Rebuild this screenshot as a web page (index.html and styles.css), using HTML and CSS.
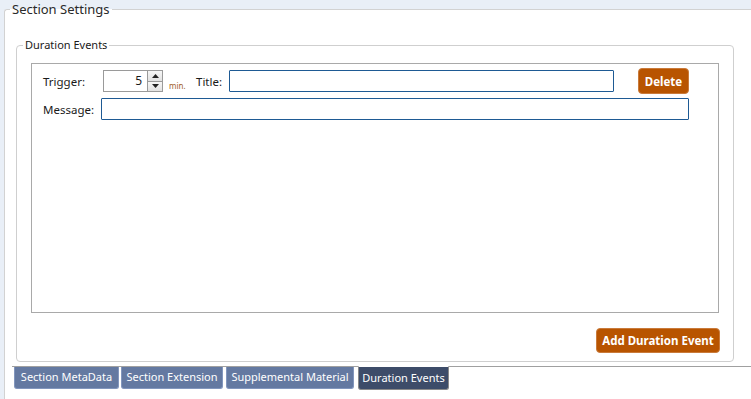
FILE: index.html
```html
<!DOCTYPE html>
<html>
<head>
<meta charset="utf-8">
<link rel="stylesheet" href="styles.css">
</head>
<body>
<fieldset class="settings">
  <legend class="settings-legend">Section Settings</legend>
  <fieldset class="events">
    <legend class="events-legend">Duration Events</legend>
    <div class="list">
      <div class="row row-first">
        <span class="label label-trigger">Trigger:</span>
        <div class="spinner">
          <span class="spin-value">5</span>
          <div class="spin-buttons">
            <span class="spin-btn"><svg width="7" height="4" viewBox="0 0 7 4"><path d="M0 4 L3.5 0 L7 4 Z" fill="#222"/></svg></span>
            <span class="spin-btn"><svg width="7" height="4" viewBox="0 0 7 4"><path d="M0 0 L3.5 4 L7 0 Z" fill="#222"/></svg></span>
          </div>
        </div>
        <span class="unit">min.</span>
        <span class="label label-title">Title:</span>
        <div class="input input-title"></div>
        <button class="btn btn-delete">Delete</button>
      </div>
      <div class="row row-second">
        <span class="label label-message">Message:</span>
        <div class="input input-message"></div>
      </div>
    </div>
    <div class="actions">
      <button class="btn btn-add">Add Duration Event</button>
    </div>
  </fieldset>
  <div class="tabs">
    <div class="tab tab-1">Section MetaData</div>
    <div class="tab tab-2">Section Extension</div>
    <div class="tab tab-3">Supplemental Material</div>
    <div class="tab tab-active">Duration Events</div>
  </div>
</fieldset>
</body>
</html>
```
FILE: styles.css
```css
html, body {
  margin: 0;
  padding: 0;
}
body {
  width: 751px;
  height: 399px;
  overflow: hidden;
  background: #e9eff7;
  font-family: "Segoe UI", "Noto Sans", "Open Sans", sans-serif;
  color: #1a1a1a;
}
.settings {
  margin: 0 0 0 4px;
  padding: 0;
  width: 747px;
  height: 399px;
  box-sizing: border-box;
  border: 1px solid #d2d2d2;
  border-right: none;
  border-bottom: none;
  border-radius: 3px 0 0 0;
  background: #ffffff;
  min-width: 0;
}
.settings-legend {
  margin-left: 5px;
  padding: 0 2px;
  font-size: 13px;
  line-height: 18px;
  color: #2a2a2a;
}
.events {
  margin: 19px 0 0 11px;
  padding: 0;
  width: 718px;
  height: 325px;
  box-sizing: border-box;
  border: 1px solid #cfcfcf;
  border-radius: 4px;
  min-width: 0;
}
.events-legend {
  margin-left: 6px;
  padding: 0 2px;
  font-size: 11px;
  line-height: 16px;
  color: #1a1a1a;
}
.list {
  margin: 10px 0 0 14px;
  width: 688px;
  height: 250px;
  box-sizing: border-box;
  border: 1px solid #a9a9a9;
  padding: 5px 0 0 11px;
}
.row {
  display: flex;
  align-items: center;
}
.row-first {
  height: 24px;
}
.row-second {
  margin-top: 5px;
  height: 22px;
}
.label {
  font-size: 11.5px;
  color: #1a1a1a;
}
.label-trigger {
  width: 60px;
}
.label-message {
  width: 58px;
}
.spinner {
  display: flex;
  width: 60px;
  height: 22px;
  box-sizing: border-box;
  border: 1px solid #9a9a9a;
  background: #fff;
}
.spin-value {
  flex: 1;
  text-align: right;
  font-size: 12px;
  line-height: 20px;
  padding-right: 5px;
}
.spin-buttons {
  display: flex;
  flex-direction: column;
  width: 14px;
  border-left: 1px solid #9a9a9a;
}
.spin-btn {
  flex: 1;
  display: flex;
  align-items: center;
  justify-content: center;
  background: linear-gradient(#f6f6f6, #e2e2e2);
}
.spin-btn + .spin-btn {
  border-top: 1px solid #9a9a9a;
}
.unit {
  font-size: 8px;
  color: #a0602a;
  margin: 8px 0 0 6px;
  width: 27px;
}
.label-title {
  width: 33px;
}
.input {
  height: 22px;
  box-sizing: border-box;
  border: 1px solid #1e5a94;
  border-radius: 1px;
  background: #fff;
}
.input-title {
  width: 385px;
}
.input-message {
  width: 588px;
}
.btn {
  font-family: inherit;
  font-weight: bold;
  color: #ffffff;
  background: #b85400;
  border: 1px solid #c97a3a;
  border-radius: 4px;
  padding: 0;
  cursor: pointer;
}
.btn-delete {
  margin-left: 24px;
  width: 51px;
  height: 26px;
  font-size: 11.5px;
}
.actions {
  display: flex;
  justify-content: flex-end;
  width: 703px;
  margin-top: 15px;
}
.btn-add {
  width: 124px;
  height: 25px;
  font-size: 11.5px;
}
.tabs {
  display: flex;
  gap: 2px;
  margin: 4px 0 0 7px;
  padding-left: 2px;
  border-top: 1px solid #a0a0a0;
  height: 23px;
  align-items: flex-start;
}
.tab {
  height: 22px;
  box-sizing: border-box;
  padding: 0;
  text-align: center;
  font-size: 11px;
  line-height: 20px;
  color: #ffffff;
  background: #6479a1;
  border: 1px solid #8296bd;
  border-top: none;
  border-radius: 0 0 3px 3px;
  white-space: nowrap;
}
.tab-1 { width: 105px; }
.tab-2 { width: 102px; }
.tab-3 { width: 128px; margin-left: 1px; }
.tab-active {
  width: 91px;
  margin-top: -1px;
  height: 24px;
  background: #3d4c69;
  border: 1px solid #8a8a8a;
  border-top-color: #ffffff;
  margin-left: 2px;
  line-height: 21px;
}
```
